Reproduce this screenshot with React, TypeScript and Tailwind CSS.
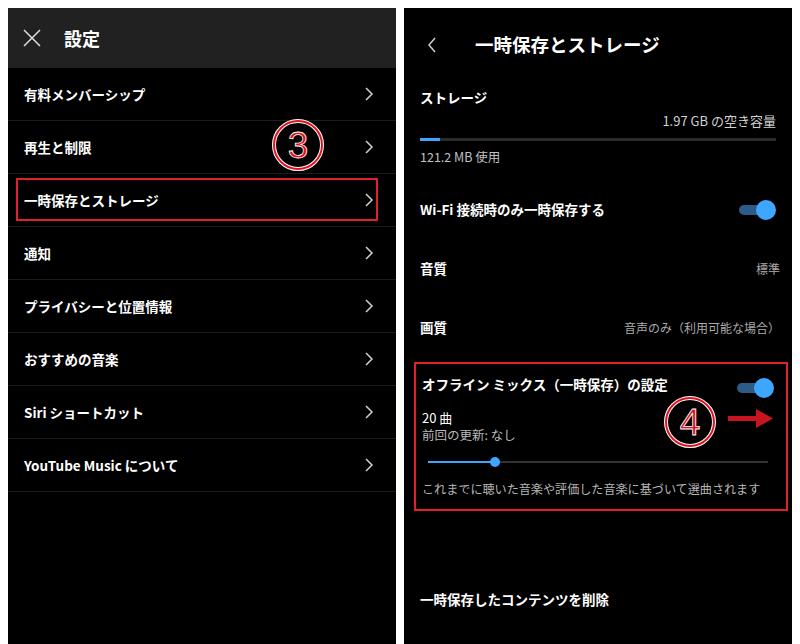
import React from 'react';

const font = "font-['Noto_Sans_CJK_JP','Noto_Sans',sans-serif]";

const menuItems = [
  '有料メンバーシップ',
  '再生と制限',
  '一時保存とストレージ',
  '通知',
  'プライバシーと位置情報',
  'おすすめの音楽',
  'Siri ショートカット',
  'YouTube Music について',
];

function Chevron() {
  return (
    <svg width="10" height="16" viewBox="0 0 10 16" className="shrink-0">
      <polyline points="2,2 8,8 2,14" fill="none" stroke="#d0d0d0" strokeWidth="1.5" />
    </svg>
  );
}

function Toggle() {
  return (
    <div className="relative w-[37px] h-[20px] shrink-0">
      <div className="absolute left-0 top-[5px] w-[32px] h-[10px] rounded-full bg-[#2b5c88]" />
      <div className="absolute right-0 top-0 w-[20px] h-[20px] rounded-full bg-[#3ea6ff]" />
    </div>
  );
}

function CircledNumber({ n }: { n: string }) {
  return (
    <svg width="54" height="54" viewBox="0 0 54 54">
      <circle cx="27" cy="27" r="24" fill="none" stroke="#ffffff" strokeWidth="4" />
      <circle cx="27" cy="27" r="24" fill="none" stroke="#e0121d" strokeWidth="2" />
      <text
        x="27"
        y="40"
        textAnchor="middle"
        fontSize="37"
        fontFamily="Liberation Sans, Arial, sans-serif"
        fill="#e0121d"
        stroke="#ffffff"
        strokeWidth="0.8"
      >
        {n}
      </text>
    </svg>
  );
}

function SettingsPanel() {
  return (
    <div className="relative w-[388px] h-[636px] bg-black flex flex-col">
      <div className="h-[60px] bg-[#212121] flex items-center px-[14px] gap-[22px]">
        <svg width="20" height="20" viewBox="0 0 20 20">
          <path d="M2 2 L18 18 M18 2 L2 18" stroke="#e0e0e0" strokeWidth="1.5" />
        </svg>
        <span className="text-white text-[18px] font-bold">設定</span>
      </div>
      {menuItems.map((label) => (
        <div
          key={label}
          className="h-[53px] flex items-center justify-between pl-4 pr-[22px] border-b border-[#1c1c1c]"
        >
          <span className="text-white text-[13.5px] font-bold">{label}</span>
          <Chevron />
        </div>
      ))}
      <div className="absolute left-[8px] top-[170px] w-[362px] h-[43px] border-2 border-[#e0202c]" />
      <div className="absolute left-[263px] top-[110px]">
        <CircledNumber n="3" />
      </div>
    </div>
  );
}

function Row({ label, value }: { label: string; value?: string }) {
  return (
    <div className="h-[59px] flex items-center justify-between pl-4 pr-[12px]">
      <span className="text-white text-[13.5px] font-bold">{label}</span>
      {value && <span className="text-[#aaaaaa] text-[12px]">{value}</span>}
    </div>
  );
}

function StoragePanel() {
  return (
    <div className="relative w-[388px] h-[636px] bg-black flex flex-col">
      <div className="h-[74px] flex items-center pl-[22px] gap-[37px]">
        <svg width="12" height="18" viewBox="0 0 12 18">
          <polyline points="9,2 3,9 9,16" fill="none" stroke="#d0d0d0" strokeWidth="1.5" />
        </svg>
        <span className="text-white text-[18.5px] font-bold">一時保存とストレージ</span>
      </div>

      <div className="pl-4 pr-[16px]">
        <div className="h-[30px] flex items-center">
          <span className="text-white text-[13.5px] font-bold">ストレージ</span>
        </div>
        <div className="h-[18px] flex items-center justify-end">
          <span className="text-[#d0d0d0] text-[13px]">1.97 GB の空き容量</span>
        </div>
        <div className="mt-[8px] h-[3px] bg-[#2c2c2c] flex">
          <div className="w-[20px] bg-[#3ea6ff]" />
        </div>
        <div className="mt-[7px] h-[18px] flex items-center">
          <span className="text-[#c0c0c0] text-[12.5px]">121.2 MB 使用</span>
        </div>
      </div>

      <div className="mt-[14px] h-[59px] flex items-center justify-between pl-4 pr-4">
        <span className="text-white text-[13.5px] font-bold">Wi-Fi 接続時のみ一時保存する</span>
        <Toggle />
      </div>
      <Row label="音質" value="標準" />
      <Row label="画質" value="音声のみ（利用可能な場合）" />

      <div className="relative pl-[18px] pr-[18px] pt-[15px] h-[154px]">
        <div className="h-[24px] flex items-center justify-between">
          <span className="text-white text-[13.5px] font-bold">オフライン ミックス（一時保存）の設定</span>
          <div className="mt-[8px]">
            <Toggle />
          </div>
        </div>
        <div className="mt-[13px] h-[17px] flex items-center">
          <span className="text-white text-[13px] leading-[16px]">20 曲</span>
        </div>
        <div className="h-[17px] flex items-center">
          <span className="text-[#bbbbbb] text-[12.5px] leading-[15px]">前回の更新: なし</span>
        </div>
        <div className="h-[38px] flex items-center pl-[6px] pr-[6px]">
          <div className="relative w-full h-[2px] bg-[#333333]">
            <div className="absolute left-0 top-0 h-[2px] w-[67px] bg-[#3ea6ff]" />
            <div className="absolute left-[62px] top-[-4px] w-[10px] h-[10px] rounded-full bg-[#3ea6ff]" />
          </div>
        </div>
        <div className="h-[16px] flex items-center">
          <span className="text-[#b5b5b5] text-[12.1px] whitespace-nowrap">
            これまでに聴いた音楽や評価した音楽に基づいて選曲されます
          </span>
        </div>

        <div className="absolute left-[10px] top-[5px] w-[374px] h-[149px] border-2 border-[#e0202c]" />
        <div className="absolute left-[259px] top-[38px]">
          <CircledNumber n="4" />
        </div>
        <svg className="absolute left-[324px] top-[50px]" width="46" height="22" viewBox="0 0 46 22">
          <rect x="0" y="9" width="30" height="5" fill="#c8141e" />
          <polygon points="28,2 45,11.5 28,21" fill="#c8141e" />
        </svg>
      </div>

      <div className="mt-[68px] h-[40px] flex items-center pl-4">
        <span className="text-white text-[13.5px] font-bold">一時保存したコンテンツを削除</span>
      </div>
    </div>
  );
}

export default function App() {
  return (
    <div className={`w-[800px] h-[644px] bg-white flex gap-2 pt-2 px-2 overflow-hidden ${font}`}>
      <SettingsPanel />
      <StoragePanel />
    </div>
  );
}
